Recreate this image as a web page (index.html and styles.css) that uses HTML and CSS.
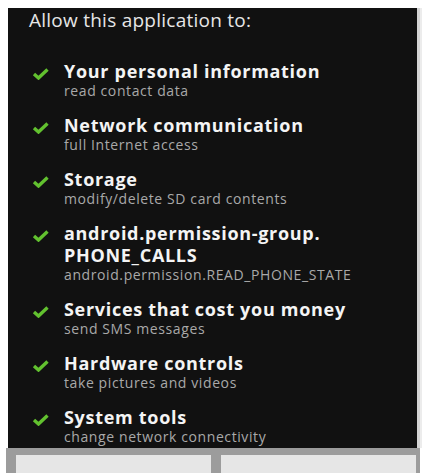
FILE: index.html
```html
<!DOCTYPE html>
<html>
<head>
<meta charset="utf-8">
<link rel="stylesheet" href="styles.css">
</head>
<body>
<div class="dialog">
  <div class="header">Allow this application to:</div>
  <ul class="perms">
    <li class="perm">
      <svg class="check" viewBox="0 0 17 12"><path d="M2 6 L6.5 10 L15.5 1.5"/></svg>
      <div class="text"><div class="title">Your personal information</div><div class="sub">read contact data</div></div>
    </li>
    <li class="perm">
      <svg class="check" viewBox="0 0 17 12"><path d="M2 6 L6.5 10 L15.5 1.5"/></svg>
      <div class="text"><div class="title">Network communication</div><div class="sub">full Internet access</div></div>
    </li>
    <li class="perm">
      <svg class="check" viewBox="0 0 17 12"><path d="M2 6 L6.5 10 L15.5 1.5"/></svg>
      <div class="text"><div class="title">Storage</div><div class="sub">modify/delete SD card contents</div></div>
    </li>
    <li class="perm">
      <svg class="check" viewBox="0 0 17 12"><path d="M2 6 L6.5 10 L15.5 1.5"/></svg>
      <div class="text"><div class="title">android.permission-group.<br>PHONE_CALLS</div><div class="sub">android.permission.READ_PHONE_STATE</div></div>
    </li>
    <li class="perm">
      <svg class="check" viewBox="0 0 17 12"><path d="M2 6 L6.5 10 L15.5 1.5"/></svg>
      <div class="text"><div class="title">Services that cost you money</div><div class="sub">send SMS messages</div></div>
    </li>
    <li class="perm">
      <svg class="check" viewBox="0 0 17 12"><path d="M2 6 L6.5 10 L15.5 1.5"/></svg>
      <div class="text"><div class="title">Hardware controls</div><div class="sub">take pictures and videos</div></div>
    </li>
    <li class="perm">
      <svg class="check" viewBox="0 0 17 12"><path d="M2 6 L6.5 10 L15.5 1.5"/></svg>
      <div class="text"><div class="title">System tools</div><div class="sub">change network connectivity</div></div>
    </li>
  </ul>
</div>
<div class="buttonbar">
  <div class="btn"></div>
  <div class="btn"></div>
</div>
</body>
</html>
```

FILE: styles.css
```css
html, body {
  margin: 0;
  padding: 0;
  background: #ffffff;
  overflow: hidden;
}
body {
  width: 424px;
  height: 473px;
  font-family: "Open Sans", "DejaVu Sans", sans-serif;
}
.dialog {
  margin: 8px 0 0 8px;
  width: 409px;
  height: 440px;
  background: #111111;
  overflow: hidden;
  box-shadow: 3px 0 0 #d4d4d4, 5px 0 0 #ececec;
}
.header {
  padding-left: 21px;
  font-size: 19px;
  line-height: 24px;
  letter-spacing: 0.25px;
  color: #e6e6e6;
}
.perms {
  list-style: none;
  margin: 28px 0 0 0;
  padding: 0;
  display: flex;
  flex-direction: column;
  gap: 14px;
}
.perm {
  display: flex;
  align-items: flex-start;
  padding-left: 24px;
  gap: 15px;
}
.check {
  width: 17px;
  height: 12px;
  margin-top: 8px;
  flex: none;
}
.check path {
  fill: none;
  stroke: #62c12f;
  stroke-width: 3.4;
  stroke-linecap: butt;
  stroke-linejoin: miter;
}
.title {
  font-size: 18px;
  line-height: 22px;
  font-weight: 700;
  letter-spacing: 0.7px;
  color: #f4f4f4;
}
.sub {
  font-size: 14px;
  line-height: 18px;
  letter-spacing: 0.6px;
  color: #a9a9a9;
}
.buttonbar {
  margin-left: 6px;
  width: 414px;
  height: 25px;
  background: #9c9c9c;
  box-sizing: border-box;
  padding: 7px 4px 0 10px;
  display: flex;
  gap: 10px;
}
.btn {
  flex: 1;
  background: #e6e6e6;
}
```
